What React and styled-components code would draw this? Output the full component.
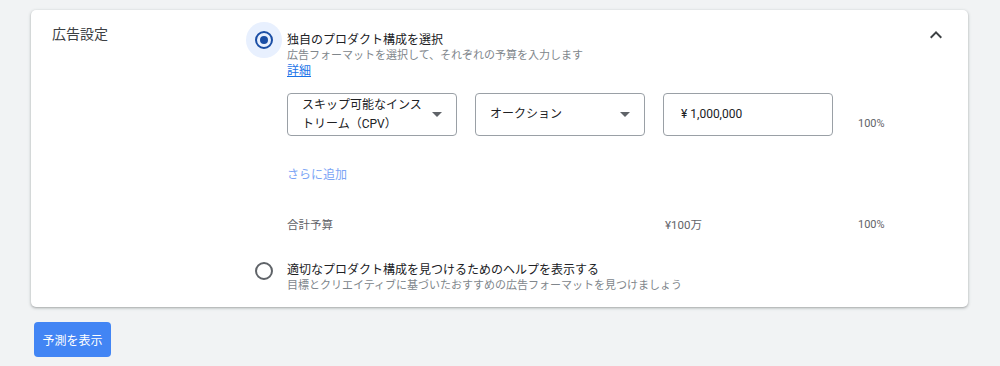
import React from "react";
import styled, { createGlobalStyle } from "styled-components";

const Global = createGlobalStyle`
  body {
    margin: 0;
    background: #f1f3f4;
    font-family: Roboto, "Noto Sans CJK JP", sans-serif;
    color: #3c4043;
  }
`;

const Page = styled.div`
  padding: 10px 32px 0 31px;
`;

const Card = styled.div`
  display: grid;
  grid-template-columns: 194px 1fr auto;
  background: #fff;
  border-radius: 5px;
  box-shadow: 0 1px 2px rgba(60, 64, 67, 0.3), 0 1px 3px 1px rgba(60, 64, 67, 0.12);
  padding: 12px 20px 13px 21px;
`;

const Heading = styled.div`
  font-size: 14px;
  line-height: 20px;
  padding-top: 2px;
`;

const Body = styled.div`
  display: flex;
  flex-direction: column;
`;

const Option = styled.div`
  display: flex;
  align-items: flex-start;
  margin-top: ${p => p.$top || 0}px;
`;

const Halo = styled.div`
  width: 36px;
  height: 36px;
  flex: none;
  border-radius: 50%;
  background: ${p => (p.$active ? "#e8f0fe" : "transparent")};
  display: flex;
  align-items: center;
  justify-content: center;
  margin-right: 5px;
`;

const Ring = styled.div`
  width: 14px;
  height: 14px;
  border-radius: 50%;
  border: 2px solid ${p => (p.$active ? "#1a4ea5" : "#5f6368")};
  display: flex;
  align-items: center;
  justify-content: center;
  &::after {
    content: "";
    display: ${p => (p.$active ? "block" : "none")};
    width: 8px;
    height: 8px;
    border-radius: 50%;
    background: #1a4ea5;
  }
`;

const Texts = styled.div`
  padding-top: ${p => p.$pad}px;
  display: flex;
  flex-direction: column;
`;

const Title = styled.div`
  font-size: 12px;
  line-height: 16px;
  color: #202124;
`;

const Sub = styled.div`
  font-size: 11px;
  line-height: 16px;
  color: #80868b;
`;

const Link = styled.a`
  font-size: 12px;
  line-height: 15px;
  color: #1a73e8;
  text-decoration: underline;
  align-self: flex-start;
`;

const Nested = styled.div`
  margin-left: 41px;
  margin-top: 14px;
`;

const Grid = styled.div`
  display: grid;
  grid-template-columns: 170px 170px 170px auto;
  column-gap: 18px;
  align-items: end;
`;

const Box = styled.div`
  box-sizing: border-box;
  height: 43px;
  border: 1px solid #9aa0a6;
  border-radius: 4px;
  display: flex;
  align-items: center;
  padding: 0 14px 0 ${p => p.$pl || 14}px;
  font-size: 12px;
  line-height: 19px;
  color: #202124;
`;

const BoxText = styled.div`
  flex: 1;
`;

const Caret = styled.div`
  width: 0;
  height: 0;
  border-left: 5px solid transparent;
  border-right: 5px solid transparent;
  border-top: 5px solid #5f6368;
  margin-left: 8px;
`;

const Pct = styled.div`
  font-size: 11px;
  color: #5f6368;
  margin-left: 7px;
  padding-bottom: ${p => p.$pb || 0}px;
`;

const AddMore = styled.div`
  font-size: 12px;
  line-height: 16px;
  color: #7ba4f5;
  margin-top: 31px;
`;

const TotalRow = styled(Grid)`
  margin-top: 33px;
  align-items: center;
  font-size: 11.5px;
  color: #5f6368;
`;

const TotalLabel = styled.div`
  grid-column: span 2;
`;

const Amount = styled.div`
  padding-left: 2px;
`;

const Chevron = styled.div`
  padding-top: 1px;
`;

const Button = styled.button`
  margin: 15px 0 0 3px;
  width: 77px;
  height: 35px;
  border: none;
  border-radius: 4px;
  background: #4285f4;
  color: #fff;
  font-family: inherit;
  font-size: 12px;
`;

export default function App() {
  return (
    <Page>
      <Global />
      <Card>
        <Heading>広告設定</Heading>
        <Body>
          <Option>
            <Halo $active>
              <Ring $active />
            </Halo>
            <Texts $pad={10}>
              <Title>独自のプロダクト構成を選択</Title>
              <Sub>広告フォーマットを選択して、それぞれの予算を入力します</Sub>
              <Link href="#">詳細</Link>
            </Texts>
          </Option>
          <Nested>
            <Grid>
              <Box>
                <BoxText>
                  スキップ可能なインス
                  <br />
                  トリーム（CPV）
                </BoxText>
                <Caret />
              </Box>
              <Box>
                <BoxText>オークション</BoxText>
                <Caret />
              </Box>
              <Box $pl={17}>
                <BoxText>¥ 1,000,000</BoxText>
              </Box>
              <Pct $pb={6}>100%</Pct>
            </Grid>
            <AddMore>さらに追加</AddMore>
            <TotalRow>
              <TotalLabel>合計予算</TotalLabel>
              <Amount>¥100万</Amount>
              <Pct>100%</Pct>
            </TotalRow>
          </Nested>
          <Option $top={21}>
            <Halo>
              <Ring />
            </Halo>
            <Texts $pad={9}>
              <Title>適切なプロダクト構成を見つけるためのヘルプを表示する</Title>
              <Sub>目標とクリエイティブに基づいたおすすめの広告フォーマットを見つけましょう</Sub>
            </Texts>
          </Option>
        </Body>
        <Chevron>
          <svg width="24" height="24" viewBox="0 0 24 24">
            <path d="M7.41 15.41 12 10.83l4.59 4.58L18 14l-6-6-6 6z" fill="#3c4043" />
          </svg>
        </Chevron>
      </Card>
      <Button>予測を表示</Button>
    </Page>
  );
}
